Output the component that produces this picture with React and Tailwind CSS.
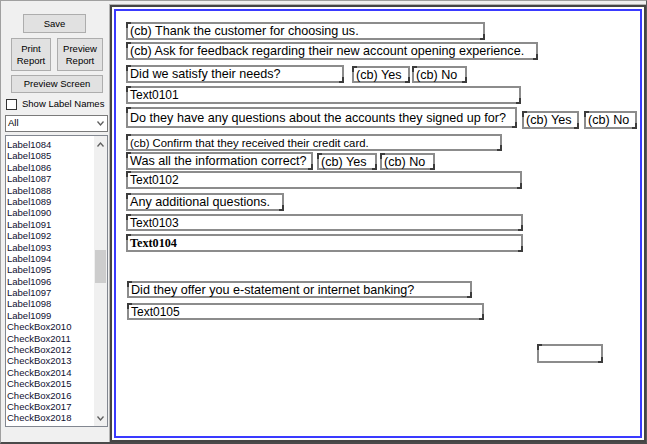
import { memo } from 'react';

const listItems = [
  'Label1084', 'Label1085', 'Label1086', 'Label1087', 'Label1088', 'Label1089',
  'Label1090', 'Label1091', 'Label1092', 'Label1093', 'Label1094', 'Label1095',
  'Label1096', 'Label1097', 'Label1098', 'Label1099',
  'CheckBox2010', 'CheckBox2011', 'CheckBox2012', 'CheckBox2013', 'CheckBox2014',
  'CheckBox2015', 'CheckBox2016', 'CheckBox2017', 'CheckBox2018',
];

// 디자인 캔버스 위 컨트롤 (x, y는 캔버스 내부 기준)
const controls = [
  { x: 10, y: 11, w: 359, h: 18, text: '(cb) Thank the customer for choosing us.' },
  { x: 10, y: 31, w: 412, h: 18, text: '(cb) Ask for feedback regarding their new account opening experience.' },
  { x: 10, y: 54, w: 218, h: 18, text: 'Did we satisfy their needs?' },
  { x: 236, y: 55, w: 58, h: 17, text: '(cb) Yes' },
  { x: 296, y: 55, w: 55, h: 17, text: '(cb) No' },
  { x: 10, y: 75, w: 395, h: 18, text: 'Text0101', kind: 'text' },
  { x: 10, y: 96, w: 391, h: 21, text: 'Do they have any questions about the accounts they signed up for?' },
  { x: 406, y: 100, w: 57, h: 18, text: '(cb) Yes' },
  { x: 468, y: 100, w: 53, h: 18, text: '(cb) No' },
  { x: 10, y: 123, w: 376, h: 17, text: '(cb) Confirm that they received their credit card.', kind: 'small' },
  { x: 10, y: 141, w: 187, h: 18, text: 'Was all the information correct?' },
  { x: 201, y: 142, w: 60, h: 17, text: '(cb) Yes' },
  { x: 264, y: 142, w: 55, h: 17, text: '(cb) No' },
  { x: 10, y: 160, w: 396, h: 18, text: 'Text0102', kind: 'text' },
  { x: 10, y: 182, w: 158, h: 18, text: 'Any additional questions.' },
  { x: 10, y: 203, w: 397, h: 17, text: 'Text0103', kind: 'text' },
  { x: 10, y: 223, w: 397, h: 18, text: 'Text0104', kind: 'serif' },
  { x: 11, y: 270, w: 345, h: 17, text: 'Did they offer you e-statement or internet banking?' },
  { x: 11, y: 292, w: 357, h: 17, text: 'Text0105', kind: 'text' },
  { x: 421, y: 333, w: 66, h: 19, text: '' },
];

const fontFor = {
  label: "text-[12.6px] font-['Liberation_Sans',Arial,sans-serif]",
  text: "text-[12px] font-['Liberation_Sans',Arial,sans-serif]",
  small: "text-[11.3px] font-['Liberation_Sans',Arial,sans-serif]",
  serif: "text-[12.2px] font-bold font-['Liberation_Serif','Times_New_Roman',serif]",
};

function Chevron({ up }) {
  return (
    <svg width="7" height="5" viewBox="0 0 7 5" className="block">
      <polyline
        points={up ? '0.5,4.5 3.5,1 6.5,4.5' : '0.5,0.5 3.5,4 6.5,0.5'}
        fill="none"
        stroke="#606060"
        strokeWidth="1.3"
      />
    </svg>
  );
}

const SidePanel = memo(function SidePanel() {
  const btn = 'bg-[#e1e1e1] border border-[#adadad] text-black flex items-center justify-center text-center leading-[12px]';
  return (
    <div className="w-[109px] shrink-0 flex flex-col text-[9.5px] font-['Liberation_Sans',Arial,sans-serif] text-black">
      {/* 버튼 */}
      <div className={`${btn} mt-[13px] ml-[22px] w-[63px] h-[19px]`}>Save</div>
      <div className="flex mt-[5px] ml-[10px] gap-[6px]">
        <div className={`${btn} w-[40px] h-[33px]`}>Print<br />Report</div>
        <div className={`${btn} w-[46px] h-[33px]`}>Preview<br />Report</div>
      </div>
      <div className={`${btn} mt-[4px] ml-[10px] w-[92px] h-[18px]`}>Preview Screen</div>

      {/* 체크박스 */}
      <div className="flex items-center mt-[6px] ml-[5px] h-[11px]">
        <div className="w-[11px] h-[11px] bg-white border border-[#333]" />
        <span className="ml-[5px]">Show Label Names</span>
      </div>

      {/* 셀렉트 */}
      <div className="mt-[5px] ml-[4px] w-[103px] h-[17px] bg-white border border-[#7a7a7a] flex items-center justify-between pl-[2px] pr-[3px]">
        <span>All</span>
        <Chevron />
      </div>

      {/* 리스트 */}
      <div className="mt-[3px] ml-[4px] w-[103px] h-[292px] bg-white border border-[#828790] flex overflow-hidden">
        <div className="flex-1 pt-[3px] pl-[1px] leading-[11.4px] text-[#101030]">
          {listItems.map((item) => (
            <div key={item} className="h-[11.4px] whitespace-nowrap">{item}</div>
          ))}
        </div>
        <div className="w-[13px] bg-[#f0f0f0] flex flex-col items-center">
          <div className="h-[16px] flex items-center justify-center"><Chevron up /></div>
          <div className="flex-1 w-full px-[1px] pt-[98px]">
            <div className="h-[33px] bg-[#cdcdcd]" />
          </div>
          <div className="h-[16px] flex items-center justify-center"><Chevron /></div>
        </div>
      </div>
    </div>
  );
});

const Canvas = memo(function Canvas() {
  return (
    <div className="mt-[4px] w-[536px] h-[437px] border-2 border-[#454545] shadow-[0_0_0_1px_#b4b4b4] bg-white p-[2px]">
      <div className="w-full h-full border-2 border-[#3a3aff] bg-white relative">
        {controls.map((c, i) => (
          <div
            key={i}
            className={`absolute flex items-center border-2 border-[#8c8c8c] bg-white pl-[2px] whitespace-nowrap text-black leading-[14px]
              before:absolute before:-left-[2px] before:-top-[2px] before:w-[5px] before:h-[6px] before:border-l-2 before:border-t-2 before:border-[#3c3c3c]
              after:absolute after:-right-[2px] after:-bottom-[2px] after:w-[5px] after:h-[6px] after:border-r-2 after:border-b-2 after:border-[#3c3c3c]
              ${fontFor[c.kind || 'label']}`}
            style={{ left: c.x, top: c.y, width: c.w, height: c.h }}
          >
            {c.text}
          </div>
        ))}
      </div>
    </div>
  );
});

export default function App() {
  return (
    <div className="w-[647px] h-[444px] bg-[#f0f0f0] flex overflow-hidden border-t border-l border-[#a0a0a0] border-r border-b-2 border-r-[#5a5a5a] border-b-[#4a4a4a]">
      <SidePanel />
      <Canvas />
    </div>
  );
}
